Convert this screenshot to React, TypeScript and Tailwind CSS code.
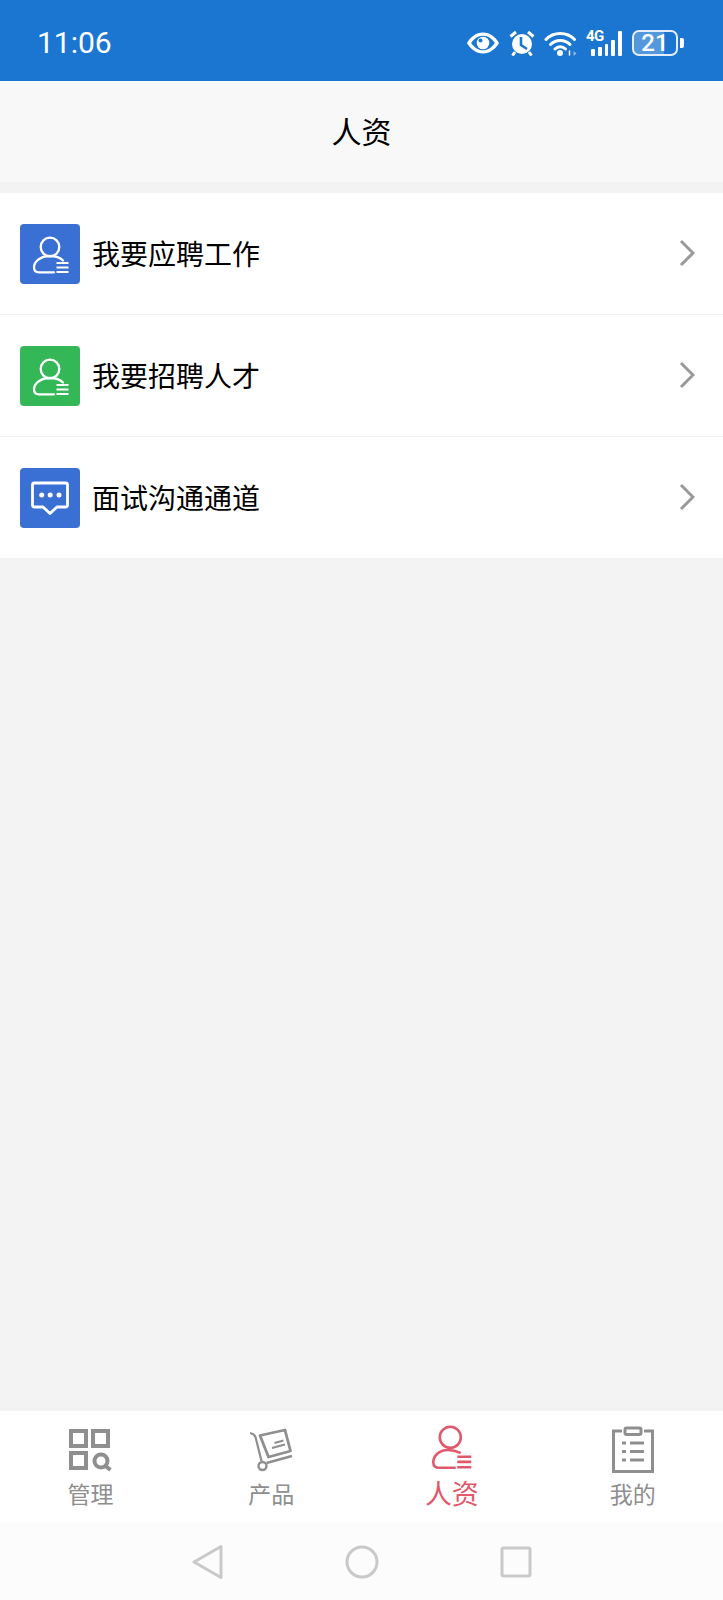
import React from 'react'

const cjk = { fontFamily: '"Noto Sans CJK SC", "Noto Sans", sans-serif' }

const PersonIcon = ({ className = '' }: { className?: string }) => (
  <svg viewBox="0 0 60 60" className={className} fill="none" stroke="currentColor">
    <circle cx="30" cy="23" r="9.3" strokeWidth="2.300" />
    <path d="M43 36.500C40 33.500 36 32 30 32 20 32 14 38 14 43.500c0 3 2 4.800 5 4.800h15" strokeWidth="2.300" strokeLinecap="round" />
    <path d="M36.500 39h12M36.500 43.500h12M36.500 48h12" strokeWidth="2.200" />
  </svg>
)

const TabPersonIcon = () => (
  <svg viewBox="0 0 40 44" className="w-[40px] h-[44px] mb-[6px] text-[#e0586c]" fill="none" stroke="currentColor">
    <circle cx="18.300" cy="12.300" r="10.500" strokeWidth="2.600" />
    <path d="M27.700 27.700C24 25.800 20 25 16 25 7 25 1.300 31 1.300 37c0 3.500 2 5.700 5 5.700h16.400" strokeWidth="2.600" strokeLinecap="round" />
    <path d="M25.300 31.700h14M25.300 36.900h14M25.300 42.200h14" strokeWidth="2.600" />
  </svg>
)

const ChatIcon = () => (
  <svg viewBox="0 0 60 60" className="w-[60px] h-[60px] text-white" fill="none" stroke="currentColor">
    <path d="M14.500 15h31a2 2 0 0 1 2 2v20a2 2 0 0 1-2 2H37l-7 6.500L23 39h-8.500a2 2 0 0 1-2-2V17a2 2 0 0 1 2-2Z" strokeWidth="2.800" strokeLinejoin="round" />
    <circle cx="21.700" cy="27" r="2.500" fill="currentColor" stroke="none" />
    <circle cx="30.200" cy="27" r="2.500" fill="currentColor" stroke="none" />
    <circle cx="39" cy="27" r="2.500" fill="currentColor" stroke="none" />
  </svg>
)

const Chevron = () => (
  <svg viewBox="0 0 16 28" className="mb-[2px] w-[16px] h-[28px] text-[#999999]" fill="none" stroke="currentColor">
    <path d="M2 2l12 12L2 26" strokeWidth="3" />
  </svg>
)

const Row = ({ label, color, last, icon }: { label: string; color: string; last?: boolean; icon: React.ReactNode }) => (
  <div className={`flex items-center bg-white pl-[20px] pr-[28px] ${last ? 'h-[121px]' : 'h-[122px] border-b border-[#f0f0f0]'}`}>
    <div className={`w-[60px] h-[60px] rounded-[4px] ${color}`}>{icon}</div>
    <span className="ml-[12px] mb-[2px] flex-1 text-[28px] leading-none text-black" style={cjk}>{label}</span>
    <Chevron />
  </div>
)

const ManageIcon = () => (
  <svg viewBox="0 0 44 44" className="w-[44px] h-[44px] text-[#8f8f8f]" fill="none" stroke="currentColor" strokeWidth="4">
    <rect x="3" y="3" width="15" height="15" />
    <rect x="25" y="3" width="15" height="15" />
    <rect x="3" y="25" width="15" height="15" />
    <circle cx="33" cy="33" r="6.500" />
    <path d="M37.500 38l5 4" />
  </svg>
)

const ProductIcon = () => (
  <svg viewBox="0 0 44 44" className="w-[44px] h-[44px] text-[#8f8f8f]" fill="none" stroke="currentColor" strokeWidth="2.200">
    <path d="M1 5c3 .5 4.500 1.500 5.500 4l6 24" />
    <circle cx="13.500" cy="38" r="4" strokeWidth="2.400" />
    <path d="M17.500 35L43 28" strokeWidth="2.800" />
    <path d="M11 7.500L36 2l5.500 21-22 6Z" strokeWidth="2.800" strokeLinejoin="round" />
    <path d="M23 20l13-3.500M25.500 15l9-2.500" strokeWidth="2" />
  </svg>
)

const ProfileIcon = () => (
  <svg viewBox="0 0 44 48" className="w-[44px] h-[48px] text-[#8f8f8f]" fill="none" stroke="currentColor" strokeWidth="3">
    <path d="M11 5H2.500v40.500h39V5H33" />
    <rect x="14" y="2" width="16" height="6.500" rx="1.500" />
    <path d="M11 17h4M19 17h14M11 25.500h4M19 25.500h14M11 34h4M19 34h14" />
  </svg>
)

const Tab = ({ label, active, icon }: { label: string; active?: boolean; icon: React.ReactNode }) => (
  <div className="flex-1 flex flex-col items-center">
    <div className="h-[46px] flex items-center justify-center">{icon}</div>
    <span
      className={active ? 'mt-[3px] text-[27px] leading-[34px] text-[#e0586c]' : 'mt-[5px] text-[23px] leading-[30px] text-[#8e8e8e]'}
      style={cjk}
    >
      {label}
    </span>
  </div>
)

const StatusIcons = () => (
  <div className="flex items-center">
    <svg viewBox="0 0 32 22" className="w-[32px] h-[22px] text-white">
      <path d="M16 .5C9 .5 3 5.500 0 11c3 5.500 9 10.500 16 10.500S29 16.500 32 11C29 5.500 23 .5 16 .5Zm0 3.200c5 0 9.300 3.200 11.800 7.300-2.500 4.100-6.800 7.300-11.800 7.300S6.700 15.100 4.200 11C6.700 6.900 11 3.700 16 3.700Z" fill="currentColor" />
      <circle cx="16" cy="11" r="6.300" fill="currentColor" />
      <circle cx="13.500" cy="8.500" r="2" fill="#1b76d1" />
    </svg>
    <svg viewBox="0 0 26 26" className="ml-[10px] w-[26px] h-[26px] text-white">
      <circle cx="13" cy="14" r="10" fill="currentColor" />
      <path d="M12 7v8l6 4" stroke="#1b76d1" strokeWidth="2.600" fill="none" />
      <path d="M1.500 6.500L7 2M24.500 6.500L19 2M6 22l-2.500 3.500M20 22l2.500 3.500" stroke="currentColor" strokeWidth="3" fill="none" />
    </svg>
    <svg viewBox="0 0 33 25" className="ml-[9px] w-[33px] h-[25px] text-white" fill="none" stroke="currentColor" strokeWidth="3" strokeLinecap="round">
      <path d="M2 8.500c7.500-8 21-8 28.500 0" />
      <path d="M6.500 13.500c5-5.500 14.500-5.500 19.500 0" />
      <path d="M11 18c3-3 7.500-3 10.500 0" />
      <circle cx="16" cy="22" r="3" fill="currentColor" stroke="none" />
      <path d="M29.500 20l3 2.500-3 2.500Z" strokeWidth="0" opacity=".5" fill="currentColor" />
      <path d="M25.500 20v4" strokeWidth="1.500" />
    </svg>
    <div className="ml-[9px] relative w-[36px] h-[25px]">
      <span className="absolute left-0 top-[-2px] text-[15px] leading-[14px] font-bold tracking-[-0.5px] text-white" style={{ fontFamily: 'Roboto, sans-serif' }}>4G</span>
      <div className="absolute left-[5px] right-0 bottom-0 flex items-end gap-[3px]">
        <div className="w-[4px] h-[7px] rounded-[1px] bg-white" />
        <div className="w-[4px] h-[9px] rounded-[1px] bg-white" />
        <div className="w-[4px] h-[12px] rounded-[1px] bg-white" />
        <div className="w-[4px] h-[16px] rounded-[1px] bg-white" />
        <div className="w-[4px] h-[25px] rounded-[1px] bg-white" />
      </div>
    </div>
    <div className="ml-[10px] relative w-[46px] h-[26px] rounded-[7px] border-2 border-[#e4eefa] flex items-center justify-center overflow-hidden">
      <div className="absolute left-0 top-0 bottom-0 w-[30px] bg-white/25" />
      <span className="relative text-[24px] leading-none font-medium text-white" style={{ fontFamily: 'Roboto, sans-serif' }}>21</span>
    </div>
    <div className="ml-[2px] w-[4px] h-[10px] rounded-r-[2px] bg-white" />
  </div>
)

export default function App() {
  return (
    <div className="w-[723px] h-[1600px] flex flex-col bg-[#f3f3f3] overflow-hidden">
      <div className="h-[81px] shrink-0 bg-[#1b76d1] flex items-center justify-between pl-[37px] pr-[39px] pt-[5px]">
        <span className="text-[30px] leading-none font-normal text-white" style={{ fontFamily: 'Roboto, sans-serif' }}>11:06</span>
        <StatusIcons />
      </div>
      <div className="h-[101px] shrink-0 bg-[#f8f8f8] flex items-center justify-center pb-[4px]">
        <span className="text-[30px] leading-none text-black" style={cjk}>人资</span>
      </div>
      <div className="mt-[11px] shrink-0">
        <Row label="我要应聘工作" color="bg-[#3a6fd4] text-white" icon={<PersonIcon className="w-[60px] h-[60px]" />} />
        <Row label="我要招聘人才" color="bg-[#33b757] text-white" icon={<PersonIcon className="w-[60px] h-[60px]" />} />
        <Row label="面试沟通通道" color="bg-[#3a6fd4]" last icon={<ChatIcon />} />
      </div>
      <div className="flex-1" />
      <div className="h-[111px] shrink-0 bg-white flex pt-[16px]">
        <Tab label="管理" icon={<ManageIcon />} />
        <Tab label="产品" icon={<ProductIcon />} />
        <Tab label="人资" active icon={<TabPersonIcon />} />
        <Tab label="我的" icon={<ProfileIcon />} />
      </div>
      <div className="h-[78px] shrink-0 bg-[#fcfcfc] flex items-center justify-center gap-[121px] pt-[1px]">
        <svg viewBox="0 0 32 36" className="w-[32px] h-[36px] text-[#c9c9c9]" fill="none" stroke="currentColor" strokeWidth="3" strokeLinejoin="round">
          <path d="M29 2.500v31L2 18Z" />
        </svg>
        <svg viewBox="0 0 34 34" className="w-[34px] h-[34px] text-[#c9c9c9]" fill="none" stroke="currentColor" strokeWidth="3">
          <circle cx="17" cy="17" r="15" />
        </svg>
        <svg viewBox="0 0 32 32" className="w-[32px] h-[32px] text-[#c9c9c9]" fill="none" stroke="currentColor" strokeWidth="3" strokeLinejoin="round">
          <rect x="2" y="2" width="28" height="28" rx="1.500" />
        </svg>
      </div>
    </div>
  )
}
